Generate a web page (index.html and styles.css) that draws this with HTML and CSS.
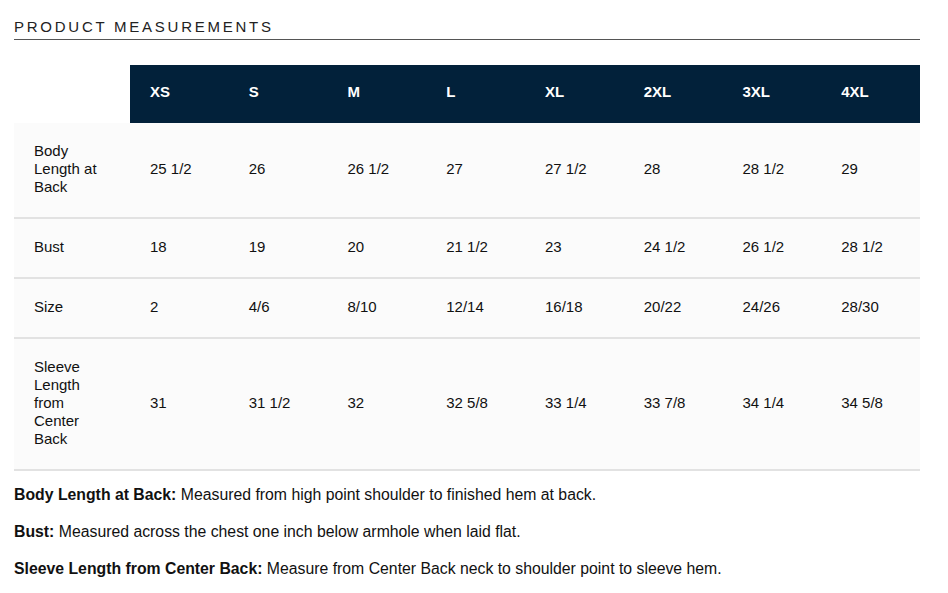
FILE: index.html
```html
<!DOCTYPE html>
<html lang="en">
<head>
<meta charset="utf-8">
<title>Product Measurements</title>
<link rel="stylesheet" href="styles.css">
</head>
<body>
<div class="page">
  <h2 class="title">PRODUCT MEASUREMENTS</h2>
  <table class="sizes">
    <thead>
      <tr>
        <th class="blank"></th>
        <th>XS</th><th>S</th><th>M</th><th>L</th><th>XL</th><th>2XL</th><th>3XL</th><th>4XL</th>
      </tr>
    </thead>
    <tbody>
      <tr>
        <td class="label">Body Length at Back</td>
        <td>25 1/2</td><td>26</td><td>26 1/2</td><td>27</td><td>27 1/2</td><td>28</td><td>28 1/2</td><td>29</td>
      </tr>
      <tr>
        <td class="label">Bust</td>
        <td>18</td><td>19</td><td>20</td><td>21 1/2</td><td>23</td><td>24 1/2</td><td>26 1/2</td><td>28 1/2</td>
      </tr>
      <tr>
        <td class="label">Size</td>
        <td>2</td><td>4/6</td><td>8/10</td><td>12/14</td><td>16/18</td><td>20/22</td><td>24/26</td><td>28/30</td>
      </tr>
      <tr>
        <td class="label">Sleeve Length from Center Back</td>
        <td>31</td><td>31 1/2</td><td>32</td><td>32 5/8</td><td>33 1/4</td><td>33 7/8</td><td>34 1/4</td><td>34 5/8</td>
      </tr>
    </tbody>
  </table>
  <div class="notes">
    <p><strong>Body Length at Back:</strong> Measured from high point shoulder to finished hem at back.</p>
    <p><strong>Bust:</strong> Measured across the chest one inch below armhole when laid flat.</p>
    <p><strong>Sleeve Length from Center Back:</strong> Measure from Center Back neck to shoulder point to sleeve hem.</p>
  </div>
</div>
</body>
</html>
```

FILE: styles.css
```css
html, body {
  margin: 0;
  padding: 0;
  background: #fff;
}
body {
  font-family: "Liberation Sans", Arial, sans-serif;
  color: #111;
}
.page {
  width: 906px;
  padding: 0 14px;
}
.title {
  margin: 0;
  padding-top: 18px;
  padding-bottom: 3px;
  font-size: 15px;
  font-weight: normal;
  letter-spacing: 2.75px;
  line-height: 18px;
  color: #222;
  border-bottom: 1px solid #555;
}
.sizes {
  margin-top: 25px;
  width: 906px;
  border-collapse: collapse;
  table-layout: fixed;
  font-size: 15px;
  line-height: 18px;
}
.sizes th, .sizes td {
  text-align: left;
  vertical-align: middle;
  padding: 19px 20px 21px;
}
.sizes th {
  background: #02213a;
  color: #fff;
  font-weight: bold;
  padding-top: 18px;
  padding-bottom: 22px;
}
.sizes th.blank {
  background: #fff;
  width: 76px;
}
.sizes td {
  background: #fbfbfb;
  border-bottom: 2px solid #e2e2e2;
  color: #111;
}
.sizes td.label {
  word-wrap: break-word;
}
.notes {
  padding-top: 4px;
  font-size: 15.8px;
  line-height: 18px;
  color: #111;
}
.notes p {
  margin: 11px 0 19px;
}
.notes strong {
  font-weight: bold;
}
```
